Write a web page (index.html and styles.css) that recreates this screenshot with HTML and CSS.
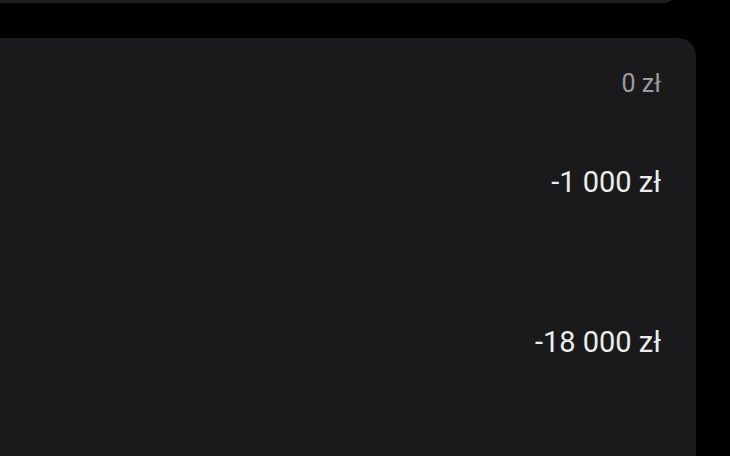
FILE: index.html
```html
<!DOCTYPE html>
<html lang="pl">
<head>
    <meta charset="UTF-8">
    <meta name="viewport" content="width=device-width, initial-scale=1.0">
    <title>Budżet</title>
    <link rel="stylesheet" href="styles.css">
</head>
<body>
    <div class="list">
        <div class="card card-prev"></div>
        <div class="card card-main">
            <div class="row row-total">
                <span class="amount amount-muted">0 zł</span>
            </div>
            <div class="row row-first">
                <span class="amount">-1 000 zł</span>
            </div>
            <div class="row row-second">
                <span class="amount">-18 000 zł</span>
            </div>
        </div>
    </div>
</body>
</html>
```

FILE: styles.css
```css
*{
    font-family: Roboto, "Noto Sans", sans-serif;
    padding: 0;
    margin: 0;
    box-sizing: border-box;
}
body {
    background-color: #000;
    width: 730px;
    height: 456px;
    overflow: hidden;
}
.list {
    display: flex;
    flex-direction: column;
    gap: 35px;
    margin-left: -30px;
}
.card {
    background-color: #1a1a1c;
    border-radius: 18px;
}
.card-prev {
    width: 710px;
    height: 60px;
    margin-top: -57px;
    background-color: #1e1e20;
}
.card-main {
    width: 726px;
    height: 418px;
    border-radius: 18px 18px 0 0;
    padding: 34px 35px 0 0;
    display: flex;
    flex-direction: column;
    align-items: flex-end;
}
.row {
    display: flex;
    justify-content: flex-end;
}
.amount {
    display: block;
    color: #ededed;
    font-size: 29px;
    line-height: 29px;
}
.amount-muted {
    color: #9c9c9c;
    font-size: 25px;
    line-height: 24px;
}
.row-first {
    margin-top: 72px;
}
.row-second {
    margin-top: 131px;
}
```
